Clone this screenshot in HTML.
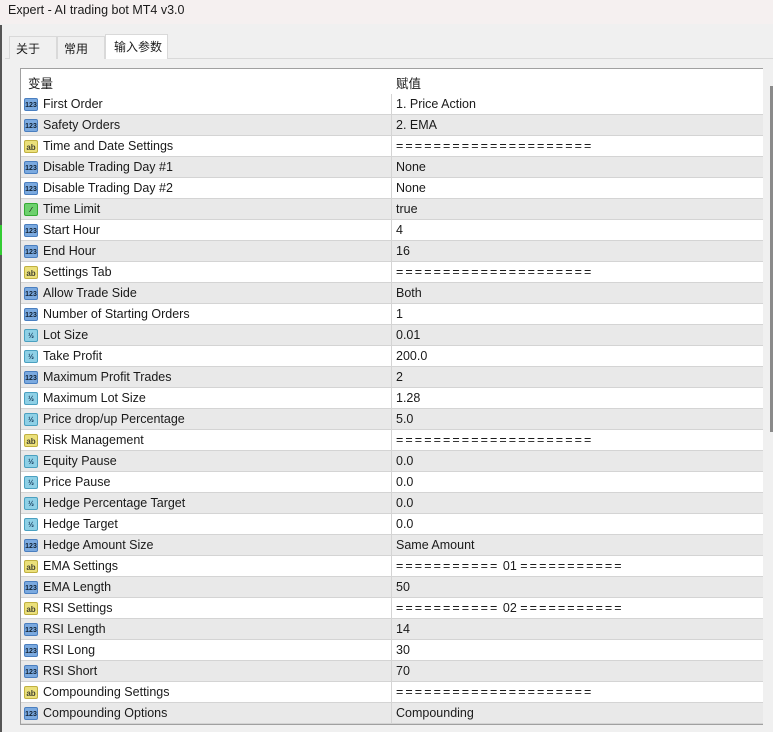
<!DOCTYPE html>
<html><head><meta charset="utf-8"><style>
*{margin:0;padding:0;box-sizing:border-box}
body{width:773px;height:732px;overflow:hidden;background:#f0f0f0;font-family:"Liberation Sans","Noto Sans CJK SC",sans-serif;font-size:12.5px;color:#1a1a1a;position:relative}
.title{position:absolute;left:0;top:0;width:773px;height:24px;background:#f5f0f0;padding:3px 0 0 8px;font-size:12.5px}
.lb{position:absolute;left:0;top:25px;width:2px;height:707px;background:#555}
.gs{position:absolute;left:0;top:225px;width:2px;height:30px;background:#3c3}
.tab{position:absolute;top:36px;height:23px;border:1px solid #d9d9d9;border-bottom:none;background:#f0f0f0;padding:3px 0 0 6px;font-size:12px}
.tabs{position:absolute;left:5px;top:58px;width:768px;height:1px;background:#d9d9d9}
.tbl{position:absolute;left:20px;top:68px;width:743px;height:657px;border:1px solid #a0a0a0;border-right:none;background:#fff;overflow:hidden}
.hdr{height:25px;position:relative;background:#fff}
.hdr span{position:absolute;top:4px}
.row{height:21px;position:relative;border-bottom:1px solid #d4d4d4}
.row.g{background:#e9e9e9}
.row .n{position:absolute;left:22px;top:3px}
.row .v{position:absolute;left:370px;border-left:1px solid #d4d4d4;height:21px;top:0;padding:3px 0 0 4px}
.eq{letter-spacing:2.1px}
.eq b{font-weight:normal;letter-spacing:0}
.ic{position:absolute;left:3px;top:4px;width:14px;height:13px;border-radius:2px;font-size:7px;font-weight:bold;text-align:center;line-height:13px}
.i1{background:#7aa9df;color:#123;border:1px solid #4a7fc0}
.ia{background:#ebe07a;color:#443;border:1px solid #c0b040;font-size:8px}
.if{background:#8ed0e6;color:#135;border:1px solid #4aa0c0}
.ib{background:#6dd06d;border:1px solid #3a3}
.sb{position:absolute;left:763px;top:68px;width:10px;height:660px;background:#f0f0f0}
.th{position:absolute;left:770px;top:86px;width:3px;height:346px;background:#8a8a8a}
</style></head><body>
<div class="title">Expert - AI trading bot MT4 v3.0</div>
<div class="lb"></div><div class="gs"></div>
<div class="tabs"></div>
<div class="tab" style="left:9px;width:48px">关于</div>
<div class="tab" style="left:57px;width:48px">常用</div>
<div class="tab" style="left:105px;width:63px;top:34px;height:25px;background:#fff;padding-left:8px">输入参数</div>
<div class="tbl">
<div class="hdr"><span style="left:7px">变量</span><span style="left:375px">赋值</span></div>
<div id="rows"></div>
</div>
<div class="sb"></div><div class="th"></div>
<script>
var d=[["1","First Order","1. Price Action"],["1","Safety Orders","2. EMA"],["a","Time and Date Settings","====================="],["1","Disable Trading Day #1","None"],["1","Disable Trading Day #2","None"],["b","Time Limit","true"],["1","Start Hour","4"],["1","End Hour","16"],["a","Settings Tab","====================="],["1","Allow Trade Side","Both"],["1","Number of Starting Orders","1"],["f","Lot Size","0.01"],["f","Take Profit","200.0"],["1","Maximum Profit Trades","2"],["f","Maximum Lot Size","1.28"],["f","Price drop/up Percentage","5.0"],["a","Risk Management","====================="],["f","Equity Pause","0.0"],["f","Price Pause","0.0"],["f","Hedge Percentage Target","0.0"],["f","Hedge Target","0.0"],["1","Hedge Amount Size","Same Amount"],["a","EMA Settings","===========<b> 01 </b>==========="],["1","EMA Length","50"],["a","RSI Settings","===========<b> 02 </b>==========="],["1","RSI Length","14"],["1","RSI Long","30"],["1","RSI Short","70"],["a","Compounding Settings","====================="],["1","Compounding Options","Compounding"]];
var h="";d.forEach(function(r,i){var c={"1":["i1","123"],"a":["ia","ab"],"f":["if","½"],"b":["ib","⁄"]}[r[0]];
var cls=r[2].indexOf("==")>=0?' eq':'';
h+='<div class="row'+(i%2?' g':'')+'"><div class="ic '+c[0]+'">'+c[1]+'</div><span class="n">'+r[1]+'</span><span class="v'+cls+'">'+r[2]+'</span></div>';});
document.getElementById("rows").innerHTML=h;
</script>
</body></html>
